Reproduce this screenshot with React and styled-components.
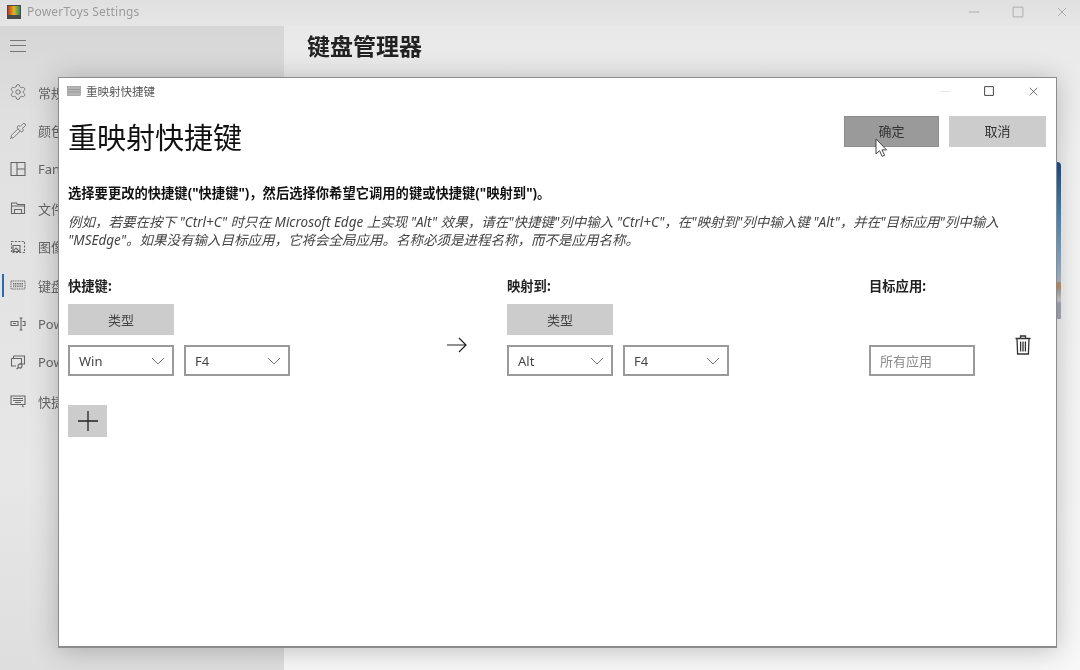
import React from "react";
import styled, { createGlobalStyle } from "styled-components";
import { Settings, Pipette } from "lucide-react";

const Global = createGlobalStyle`
  html, body { margin: 0; padding: 0; }
  body {
    width: 1080px;
    height: 670px;
    overflow: hidden;
    font-family: "Noto Sans", "Noto Sans CJK SC", sans-serif;
    color: #1a1a1a;
  }
`;

const Desktop = styled.div`
  position: relative;
  width: 1080px;
  height: 670px;
  overflow: hidden;
  display: flex;
  flex-direction: column;
  background: #f3f3f3;
  filter: blur(0.35px);
`;

const TitleBar = styled.header`
  height: 26px;
  flex: none;
  display: flex;
  align-items: center;
  padding: 0 0 3px 7px;
  box-sizing: border-box;
  background: linear-gradient(#e0e0e0, #e6e6e6);
`;

const AppLogo = styled.div`
  width: 14px;
  height: 14px;
  margin-right: 6px;
  background: linear-gradient(90deg, #c0392b, #e6b422 50%, #2e8b57);
  border: 1px solid #4a4a4a;
  border-bottom-width: 4px;
  box-sizing: border-box;
`;

const AppTitle = styled.span`
  font-size: 12px;
  letter-spacing: 0.2px;
  color: #9b9b9b;
`;

const WinControls = styled.div`
  margin-left: auto;
  display: flex;
  align-items: center;
  gap: 32px;
  padding-right: 12px;
  color: ${(p) => p.$color};
`;

const Body = styled.div`
  flex: 1;
  display: flex;
  min-height: 0;
`;

const Sidebar = styled.nav`
  width: 284px;
  flex: none;
  background: linear-gradient(#d6d6d6, #e0e0e0 15%, #e7e7e7 70%, #dedede);
  padding: 9px 0 0 10px;
  box-sizing: border-box;
`;

const Hamburger = styled.div`
  width: 16px;
  height: 10px;
  border-top: 1px solid #777;
  border-bottom: 1px solid #777;
  position: relative;
  margin-bottom: 21px;
  margin-top: 5px;
  &::after {
    content: "";
    position: absolute;
    left: 0;
    right: 0;
    top: 4px;
    border-top: 1px solid #777;
  }
`;

const NavList = styled.div`
  display: flex;
  flex-direction: column;
`;

const NavItem = styled.div`
  height: 38.6px;
  display: flex;
  align-items: center;
  gap: 12px;
  font-size: 13px;
  color: #666;
  white-space: nowrap;
  position: relative;
  svg { flex: none; color: #666; }
  .lucide { margin: 0 -1px; }
  ${(p) =>
    p.$active &&
    `&::before {
      content: "";
      position: absolute;
      left: -8px;
      top: 8px;
      bottom: 8px;
      width: 2px;
      background: #2a6cb0;
    }`}
`;

const Content = styled.main`
  flex: 1;
  background: linear-gradient(#e8e8e8, #f2f2f2 20%, #f8f8f8);
  padding: 2px 0 0 23px;
`;

const PageTitle = styled.h1`
  margin: 0;
  font-size: 23px;
  line-height: 36px;
  font-weight: 700;
  color: #222;
`;

const Peek = styled.div`
  position: absolute;
  left: 1056px;
  top: 162px;
  width: 5px;
  height: 157px;
  border-radius: 0 4px 0 0;
  background: linear-gradient(#1f4e8c, #4f8fc0 35%, #9db9d2 70%, #aebfd0 76%, #c49468 77%, #c49468 80%, #a8a8ae 82%, #d0d0d6 88%, #a9a9bb 90%);
`;

const Dialog = styled.section`
  position: absolute;
  left: 58px;
  top: 77px;
  width: 999px;
  height: 571px;
  box-sizing: border-box;
  display: flex;
  flex-direction: column;
  background: #fff;
  border: 1px solid #8c8c8c;
  border-bottom-width: 2px;
  box-shadow: 0 2px 26px rgba(0, 0, 0, 0.24);
`;

const DialogBar = styled.div`
  height: 26px;
  flex: none;
  display: flex;
  align-items: center;
  padding-left: 8px;
  gap: 5px;
  font-size: 11.5px;
  color: #555;
`;

const DialogControls = styled(WinControls)`
  gap: 34px;
  padding-right: 17px;
`;

const MinDash = styled.span`
  width: 10px;
  height: 1px;
  background: #e6e6e6;
`;

const DialogBody = styled.div`
  flex: 1;
  padding: 12px 10px 0 9px;
  display: flex;
  flex-direction: column;
`;

const HeaderRow = styled.div`
  display: flex;
  align-items: flex-start;
  height: 68px;
`;

const DialogHeading = styled.h2`
  margin: 0;
  font-size: 29px;
  line-height: 44px;
  font-weight: 400;
  color: #111;
`;

const Actions = styled.div`
  margin-left: auto;
  display: flex;
  gap: 10px;
  position: relative;
`;

const ActionButton = styled.button`
  width: ${(p) => p.$w}px;
  height: 31px;
  border: none;
  padding: 0 0 2px;
  font: inherit;
  font-size: 13px;
  color: #333;
  background: ${(p) => (p.$hover ? "#9a9a9a" : "#cccccc")};
  box-shadow: ${(p) => (p.$hover ? "inset 0 0 0 1px #8c8c8c" : "none")};
`;

const Cursor = styled.svg`
  position: absolute;
  left: 31px;
  top: 22px;
`;

const Lead = styled.p`
  margin: 0;
  font-size: 13.3px;
  line-height: 18px;
  font-weight: 700;
  color: #111;
`;

const Note = styled.p`
  margin: 11px 0 0;
  font-size: 13.5px;
  line-height: 18px;
  font-style: italic;
  color: #444;
  white-space: nowrap;
`;

const MapGrid = styled.div`
  margin-top: 28px;
  display: grid;
  grid-template-columns: 222px 217px 362px 146px 30px;
  grid-template-rows: 18px auto;
`;

const ColumnLabel = styled.div`
  font-size: 13.3px;
  line-height: 18px;
  font-weight: 700;
  color: #222;
  grid-column: ${(p) => p.$col};
`;

const ShortcutCell = styled.div`
  display: flex;
  flex-direction: column;
  gap: 10px;
  padding-top: 9px;
  grid-row: 2;
  grid-column: ${(p) => p.$col};
`;

const TypeButton = styled.button`
  width: 106px;
  height: 31px;
  border: none;
  padding: 0;
  font: inherit;
  font-size: 13px;
  color: #444;
  background: #cccccc;
`;

const KeyRow = styled.div`
  display: flex;
  gap: 10px;
`;

const KeySelect = styled.div`
  width: 106px;
  height: 31px;
  box-sizing: border-box;
  border: 2px solid #9a9a9a;
  display: flex;
  align-items: center;
  justify-content: space-between;
  padding: 0 7px 0 9px;
  font-size: 13px;
  color: #444;
  background: #fff;
  svg { color: #777; }
`;

const ArrowCell = styled.div`
  grid-row: 2;
  grid-column: 2;
  padding: 42px 0 0 156px;
  color: #222;
`;

const TargetCell = styled.div`
  grid-row: 2;
  grid-column: 4;
  padding-top: 50px;
`;

const TargetInput = styled.div`
  width: 106px;
  height: 31px;
  box-sizing: border-box;
  border: 2px solid #9a9a9a;
  display: flex;
  align-items: center;
  padding-left: 9px;
  font-size: 13px;
  color: #8a8a8a;
`;

const TrashCell = styled.div`
  grid-row: 2;
  grid-column: 5;
  padding-top: 40px;
  color: #333;
`;

const AddButton = styled.button`
  margin-top: 29px;
  width: 39px;
  height: 32px;
  border: none;
  padding: 0;
  background: #cccccc;
  color: #222;
  display: flex;
  align-items: center;
  justify-content: center;
`;

const Ic = ({ size = 16, children, sw = 1.1 }) => (
  <svg width={size} height={size} viewBox="0 0 16 16" fill="none" stroke="currentColor" strokeWidth={sw} style={{ display: "block" }}>
    {children}
  </svg>
);

const Close = ({ size }) => (
  <Ic size={size}>
    <path d="M2.5 2.5l11 11M13.5 2.5l-11 11" />
  </Ic>
);

const Chevron = () => (
  <svg width="14" height="8" viewBox="0 0 14 8" fill="none" stroke="currentColor" strokeWidth="1">
    <path d="M1 1l6 6 6-6" />
  </svg>
);

const KeySel = ({ label }) => (
  <KeySelect>
    {label}
    <Chevron />
  </KeySelect>
);

const navItems = [
  ["常规选项", <Settings size={18} strokeWidth={1.1} />],
  ["颜色选取器", <Pipette size={18} strokeWidth={1.1} />],
  ["FancyZones", <Ic><path d="M1 1.5h14v13H1zM7 1.5v13M7 8h8" /></Ic>],
  ["文件资源管理器", <Ic><path d="M1.5 3h5l1 1.5h7v9h-13zM1.5 6h13M4.5 13V9.5h7V13" /></Ic>],
  ["图像大小调整", <Ic><path d="M1.5 2.5h13v11h-13z" strokeDasharray="2 1.4" /><path d="M3 12.5l3-3.5 3 3M3 6.5h7v6H3z" /></Ic>],
  ["键盘管理器", <Ic sw={1}><path d="M1 4h14v8H1zM3 6.5h10M3 8h10M3 9.7h10" strokeDasharray="1.2 .6" /></Ic>, true],
  ["PowerRename", <Ic><path d="M1 5.5h7v4H1zM3 7.5h3M11 2v12M9.5 2h3M9.5 14h3M12.5 5.5H15v4h-2.5" /></Ic>],
  ["PowerToys Run", <Ic><path d="M3.5 2h11v8H9M3.5 2v2M1.5 4.5h10V10M1.5 4.5V12H6" /><circle cx="10" cy="12" r="2" /><path d="M8.5 13.5L6.5 15" /></Ic>],
  ["快捷键指南", <Ic><path d="M1 3h14v8.5H1zM3 5.5h10M3 7.5h10M5 9.5h6" /><path d="M12 12.5l1.5 1.5" /></Ic>],
];

export default function App() {
  return (
    <>
      <Global />
      <Desktop>
        <TitleBar>
          <AppLogo />
          <AppTitle>PowerToys Settings</AppTitle>
          <WinControls $color="#a3a3a3">
            <Ic size={12}><path d="M1 8h14" /></Ic>
            <Ic size={12}><path d="M1.5 1.5h13v13h-13z" /></Ic>
            <Close size={12} />
          </WinControls>
        </TitleBar>
        <Body>
          <Sidebar>
            <Hamburger />
            <NavList>
              {navItems.map(([label, icon, active]) => (
                <NavItem key={label} $active={active}>
                  {icon}
                  {label}
                </NavItem>
              ))}
            </NavList>
          </Sidebar>
          <Content>
            <PageTitle>键盘管理器</PageTitle>
          </Content>
        </Body>
        <Peek />
        <Dialog>
          <DialogBar>
            <svg width="14" height="10" viewBox="0 0 14 10" fill="#b5b5b5" stroke="#8a8a8a" strokeWidth="0.6">
              <rect x="0.5" y="0.5" width="13" height="9" />
              <path d="M1 3.5h12M1 6h12" />
            </svg>
            重映射快捷键
            <DialogControls $color="#444">
              <MinDash />
              <Ic size={10} sw={1.6}><path d="M1 1h14v14H1z" /></Ic>
              <Close size={11} />
            </DialogControls>
          </DialogBar>
          <DialogBody>
            <HeaderRow>
              <DialogHeading>重映射快捷键</DialogHeading>
              <Actions>
                <ActionButton $w={95} $hover>确定</ActionButton>
                <ActionButton $w={97}>取消</ActionButton>
                <Cursor width="13" height="20" viewBox="0 0 13 20">
                  <path d="M1 1v15l3.6-3.2 2.6 5.6 2.4-1.1-2.6-5.4h4.6z" fill="#fff" stroke="#444" strokeWidth="1" />
                </Cursor>
              </Actions>
            </HeaderRow>
            <Lead>选择要更改的快捷键("快捷键")，然后选择你希望它调用的键或快捷键("映射到")。</Lead>
            <Note>
              例如，若要在按下 "Ctrl+C" 时只在 Microsoft Edge 上实现 "Alt" 效果，请在"快捷键"列中输入 "Ctrl+C"，在"映射到"列中输入键 "Alt"，并在"目标应用"列中输入
              <br />
              "MSEdge"。如果没有输入目标应用，它将会全局应用。名称必须是进程名称，而不是应用名称。
            </Note>
            <MapGrid>
              <ColumnLabel $col={1}>快捷键:</ColumnLabel>
              <ColumnLabel $col={3}>映射到:</ColumnLabel>
              <ColumnLabel $col={4}>目标应用:</ColumnLabel>
              <ShortcutCell $col={1}>
                <TypeButton>类型</TypeButton>
                <KeyRow>
                  <KeySel label="Win" />
                  <KeySel label="F4" />
                </KeyRow>
              </ShortcutCell>
              <ArrowCell>
                <svg width="22" height="16" viewBox="0 0 22 16" fill="none" stroke="currentColor" strokeWidth="1.2" style={{ display: "block" }}>
                  <path d="M1 8h19M13 1l7 7-7 7" />
                </svg>
              </ArrowCell>
              <ShortcutCell $col={3}>
                <TypeButton>类型</TypeButton>
                <KeyRow>
                  <KeySel label="Alt" />
                  <KeySel label="F4" />
                </KeyRow>
              </ShortcutCell>
              <TargetCell>
                <TargetInput>所有应用</TargetInput>
              </TargetCell>
              <TrashCell>
                <svg width="16" height="20" viewBox="0 0 16 20" fill="none" stroke="currentColor" strokeWidth="1.3" style={{ display: "block" }}>
                  <path d="M0.5 3.5h15M5.5 3.5V1h5v2.5M2 3.5l.6 15.5h10.8L14 3.5M5.6 6.5v10M8 6.5v10M10.4 6.5v10" />
                </svg>
              </TrashCell>
            </MapGrid>
            <AddButton aria-label="add">
              <svg width="20" height="20" viewBox="0 0 20 20" fill="none" stroke="currentColor" strokeWidth="1.3">
                <path d="M10 0v20M0 10h20" />
              </svg>
            </AddButton>
          </DialogBody>
        </Dialog>
      </Desktop>
    </>
  );
}
